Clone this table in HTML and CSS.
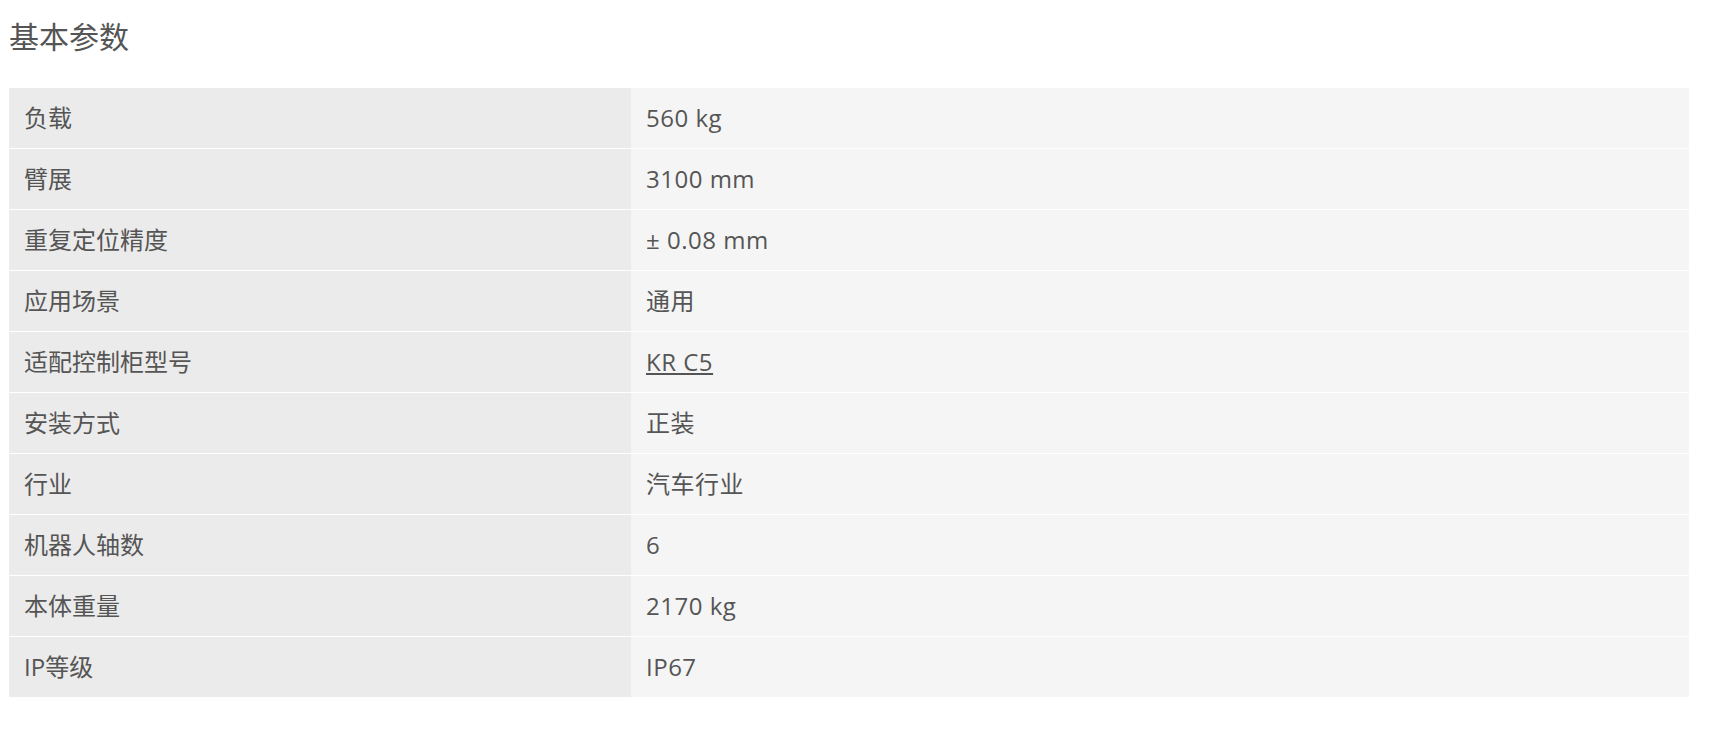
FILE: index.html
```html
<!DOCTYPE html>
<html lang="zh-CN">
<head>
    <meta charset="UTF-8">
    <meta name="viewport" content="width=device-width, initial-scale=1.0">
    <link rel="stylesheet" href="styles.css">
    <title>基本参数</title>
</head>
<body>
    <div class="params">
        <h2 class="params-title">基本参数</h2>
        <table class="params-table">
            <tr><td class="label">负载</td><td class="value">560 kg</td></tr>
            <tr><td class="label">臂展</td><td class="value">3100 mm</td></tr>
            <tr><td class="label">重复定位精度</td><td class="value">± 0.08 mm</td></tr>
            <tr><td class="label">应用场景</td><td class="value">通用</td></tr>
            <tr><td class="label">适配控制柜型号</td><td class="value"><a href="#">KR C5</a></td></tr>
            <tr><td class="label">安装方式</td><td class="value">正装</td></tr>
            <tr><td class="label">行业</td><td class="value">汽车行业</td></tr>
            <tr><td class="label">机器人轴数</td><td class="value">6</td></tr>
            <tr><td class="label">本体重量</td><td class="value">2170 kg</td></tr>
            <tr><td class="label">IP等级</td><td class="value">IP67</td></tr>
        </table>
    </div>
</body>
</html>
```

FILE: styles.css
```css
body {
    margin: 0;
    background: #fff;
    color: #555;
    font-family: "Open Sans", "Noto Sans CJK SC", sans-serif;
}

.params {
    width: 1680px;
    margin: 0 9px;
}

.params-title {
    margin: 15px 0 29px;
    font-size: 30px;
    font-weight: normal;
    line-height: 44px;
}

.params-table {
    width: 100%;
    border-collapse: collapse;
    font-size: 24px;
}

.params-table td {
    height: 60px;
    padding: 0 15px;
    vertical-align: middle;
    line-height: 1.5;
}

.params-table tr + tr td {
    border-top: 1px solid #fff;
}

.params-table .label {
    width: 592px;
    background-color: #ebebeb;
}

.params-table .value {
    background-color: #f5f5f5;
    letter-spacing: 0.5px;
}

.params-table a {
    color: #555;
    text-decoration: underline;
}
```
